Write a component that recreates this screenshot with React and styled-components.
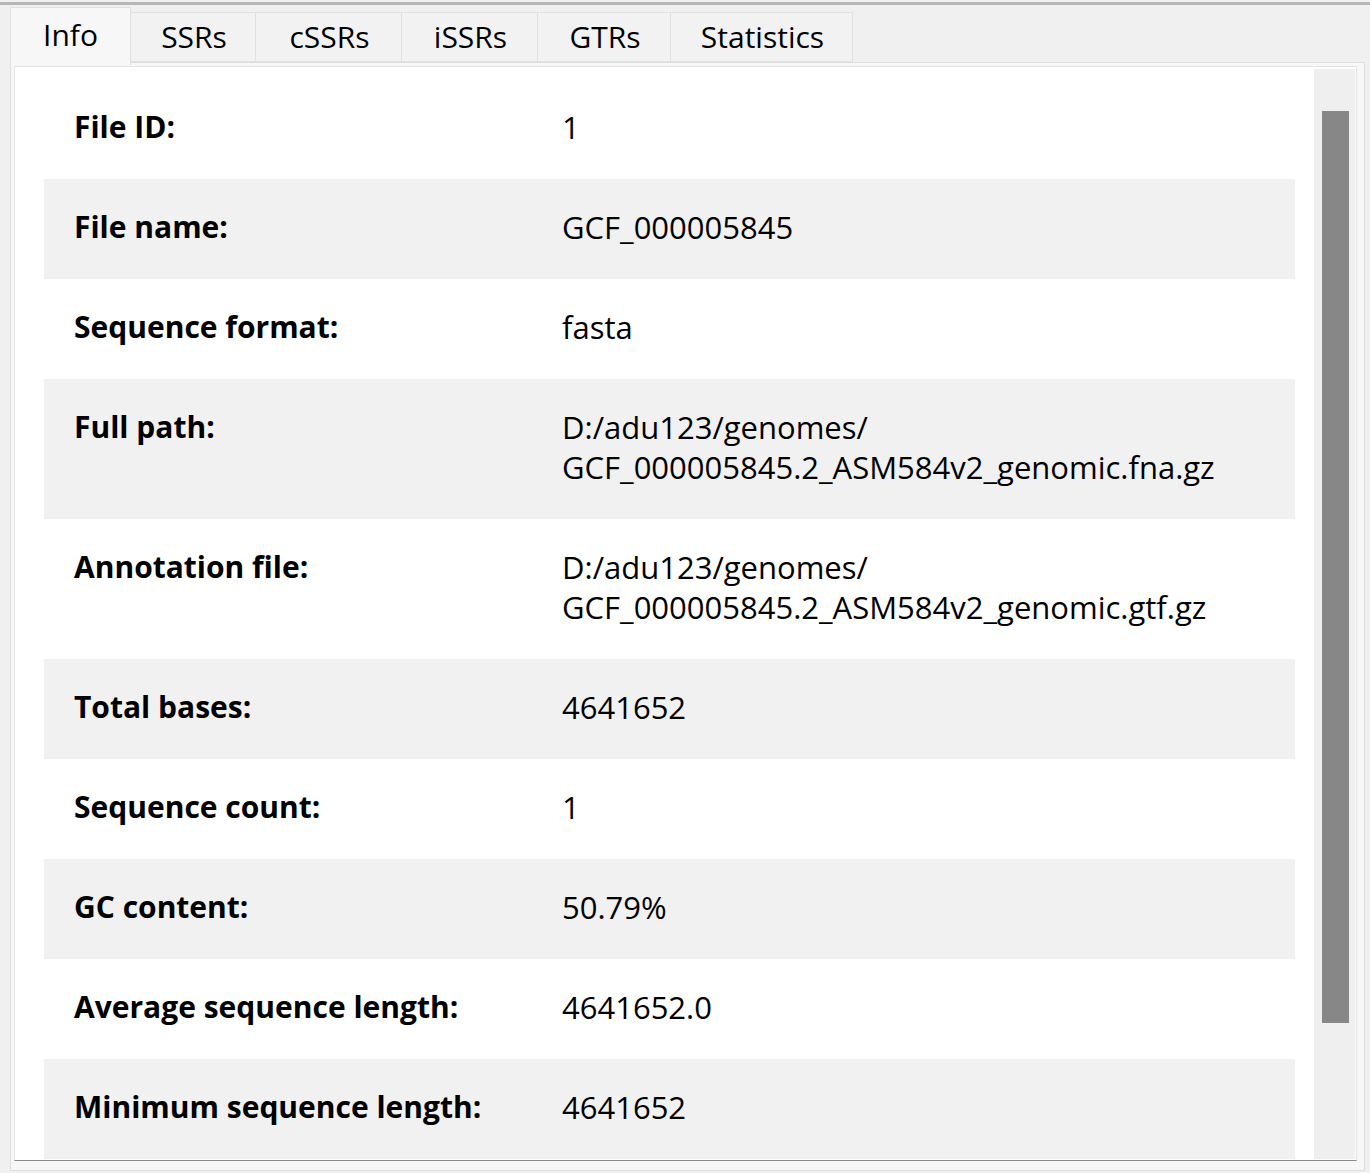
import React from "react";
import styled, { createGlobalStyle } from "styled-components";

const GlobalStyle = createGlobalStyle`
  html, body {
    margin: 0;
    padding: 0;
    background: #f0f0f0;
  }
  body {
    font-family: "Open Sans", "Noto Sans", "Liberation Sans", sans-serif;
    color: #000;
  }
`;

const Window = styled.div`
  width: 1370px;
  height: 1173px;
  box-sizing: border-box;
  padding-top: 2px;
  background: #f0f0f0;
  overflow: hidden;
`;

const TopRule = styled.div`
  height: 3px;
  background: #b7b7b7;
`;

const TabBar = styled.div`
  display: flex;
  align-items: flex-start;
  padding: 2px 0 0 10px;
  height: 55px;
  position: relative;
  z-index: 1;
`;

const Tab = styled.div`
  box-sizing: border-box;
  flex: none;
  width: ${(p) => p.$width}px;
  height: ${(p) => (p.$active ? 58 : 50)}px;
  margin-top: ${(p) => (p.$active ? 0 : 5)}px;
  display: flex;
  align-items: center;
  justify-content: center;
  font-size: 30px;
  background: ${(p) => (p.$active ? "#f7f7f7" : "#f2f2f2")};
  border: 1px solid #e1e1e1;
  border-left: ${(p) => (p.$first ? "1px solid #e1e1e1" : "none")};
  border-bottom: ${(p) => (p.$active ? "none" : "1px solid #e1e1e1")};
  padding-bottom: ${(p) => (p.$active ? 5 : 1)}px;
  padding-left: ${(p) => (p.$first ? 0 : 2)}px;
`;

const Pane = styled.div`
  box-sizing: border-box;
  margin-left: 10px;
  width: 1355px;
  height: 1109px;
  background: #f7f7f7;
  border: 1px solid #dedede;
  padding: 3px 7px 9px 3px;
`;

const Frame = styled.div`
  box-sizing: border-box;
  height: 100%;
  display: flex;
  background: #fff;
  border: 1px solid #e3e3e3;
  border-bottom: 1px solid #8a8a8a;
`;

const Viewport = styled.div`
  flex: 1;
  overflow: hidden;
  padding: 12px 19px 0 29px;
`;

const Table = styled.div`
  display: flex;
  flex-direction: column;
`;

const Row = styled.div`
  display: grid;
  grid-template-columns: 487px 1fr;
  align-items: start;
  padding: 28px 0 32px 30px;
  background: ${(p) => (p.$shaded ? "#f1f1f1" : "#ffffff")};
  line-height: 40px;
`;

const Label = styled.div`
  font-size: 30px;
  font-weight: 700;
`;

const Value = styled.div`
  font-size: 31px;
  white-space: pre-line;
  margin-left: 1px;
`;

const ScrollTrack = styled.div`
  width: 41px;
  margin: 2px 1px 1px 0;
  background: #efefef;
  display: flex;
  justify-content: center;
  padding-top: 42px;
  box-sizing: border-box;
`;

const ScrollThumb = styled.div`
  width: 27px;
  height: 912px;
  background: #878787;
  margin-left: 1px;
`;

const tabs = [
  { name: "Info", width: 121 },
  { name: "SSRs", width: 125 },
  { name: "cSSRs", width: 146 },
  { name: "iSSRs", width: 136 },
  { name: "GTRs", width: 133 },
  { name: "Statistics", width: 182 },
];

const info = [
  ["File ID:", "1"],
  ["File name:", "GCF_000005845"],
  ["Sequence format:", "fasta"],
  ["Full path:", "D:/adu123/genomes/\nGCF_000005845.2_ASM584v2_genomic.fna.gz"],
  ["Annotation file:", "D:/adu123/genomes/\nGCF_000005845.2_ASM584v2_genomic.gtf.gz"],
  ["Total bases:", "4641652"],
  ["Sequence count:", "1"],
  ["GC content:", "50.79%"],
  ["Average sequence length:", "4641652.0"],
  ["Minimum sequence length:", "4641652"],
];

export default function App() {
  return (
    <Window>
      <GlobalStyle />
      <TopRule />
      <TabBar>
        {tabs.map((t, i) => (
          <Tab key={t.name} $width={t.width} $active={i === 0} $first={i === 0}>
            {t.name}
          </Tab>
        ))}
      </TabBar>
      <Pane>
        <Frame>
          <Viewport>
            <Table>
              {info.map(([label, value], i) => (
                <Row key={label} $shaded={i % 2 === 1}>
                  <Label>{label}</Label>
                  <Value>{value}</Value>
                </Row>
              ))}
            </Table>
          </Viewport>
          <ScrollTrack>
            <ScrollThumb />
          </ScrollTrack>
        </Frame>
      </Pane>
    </Window>
  );
}
